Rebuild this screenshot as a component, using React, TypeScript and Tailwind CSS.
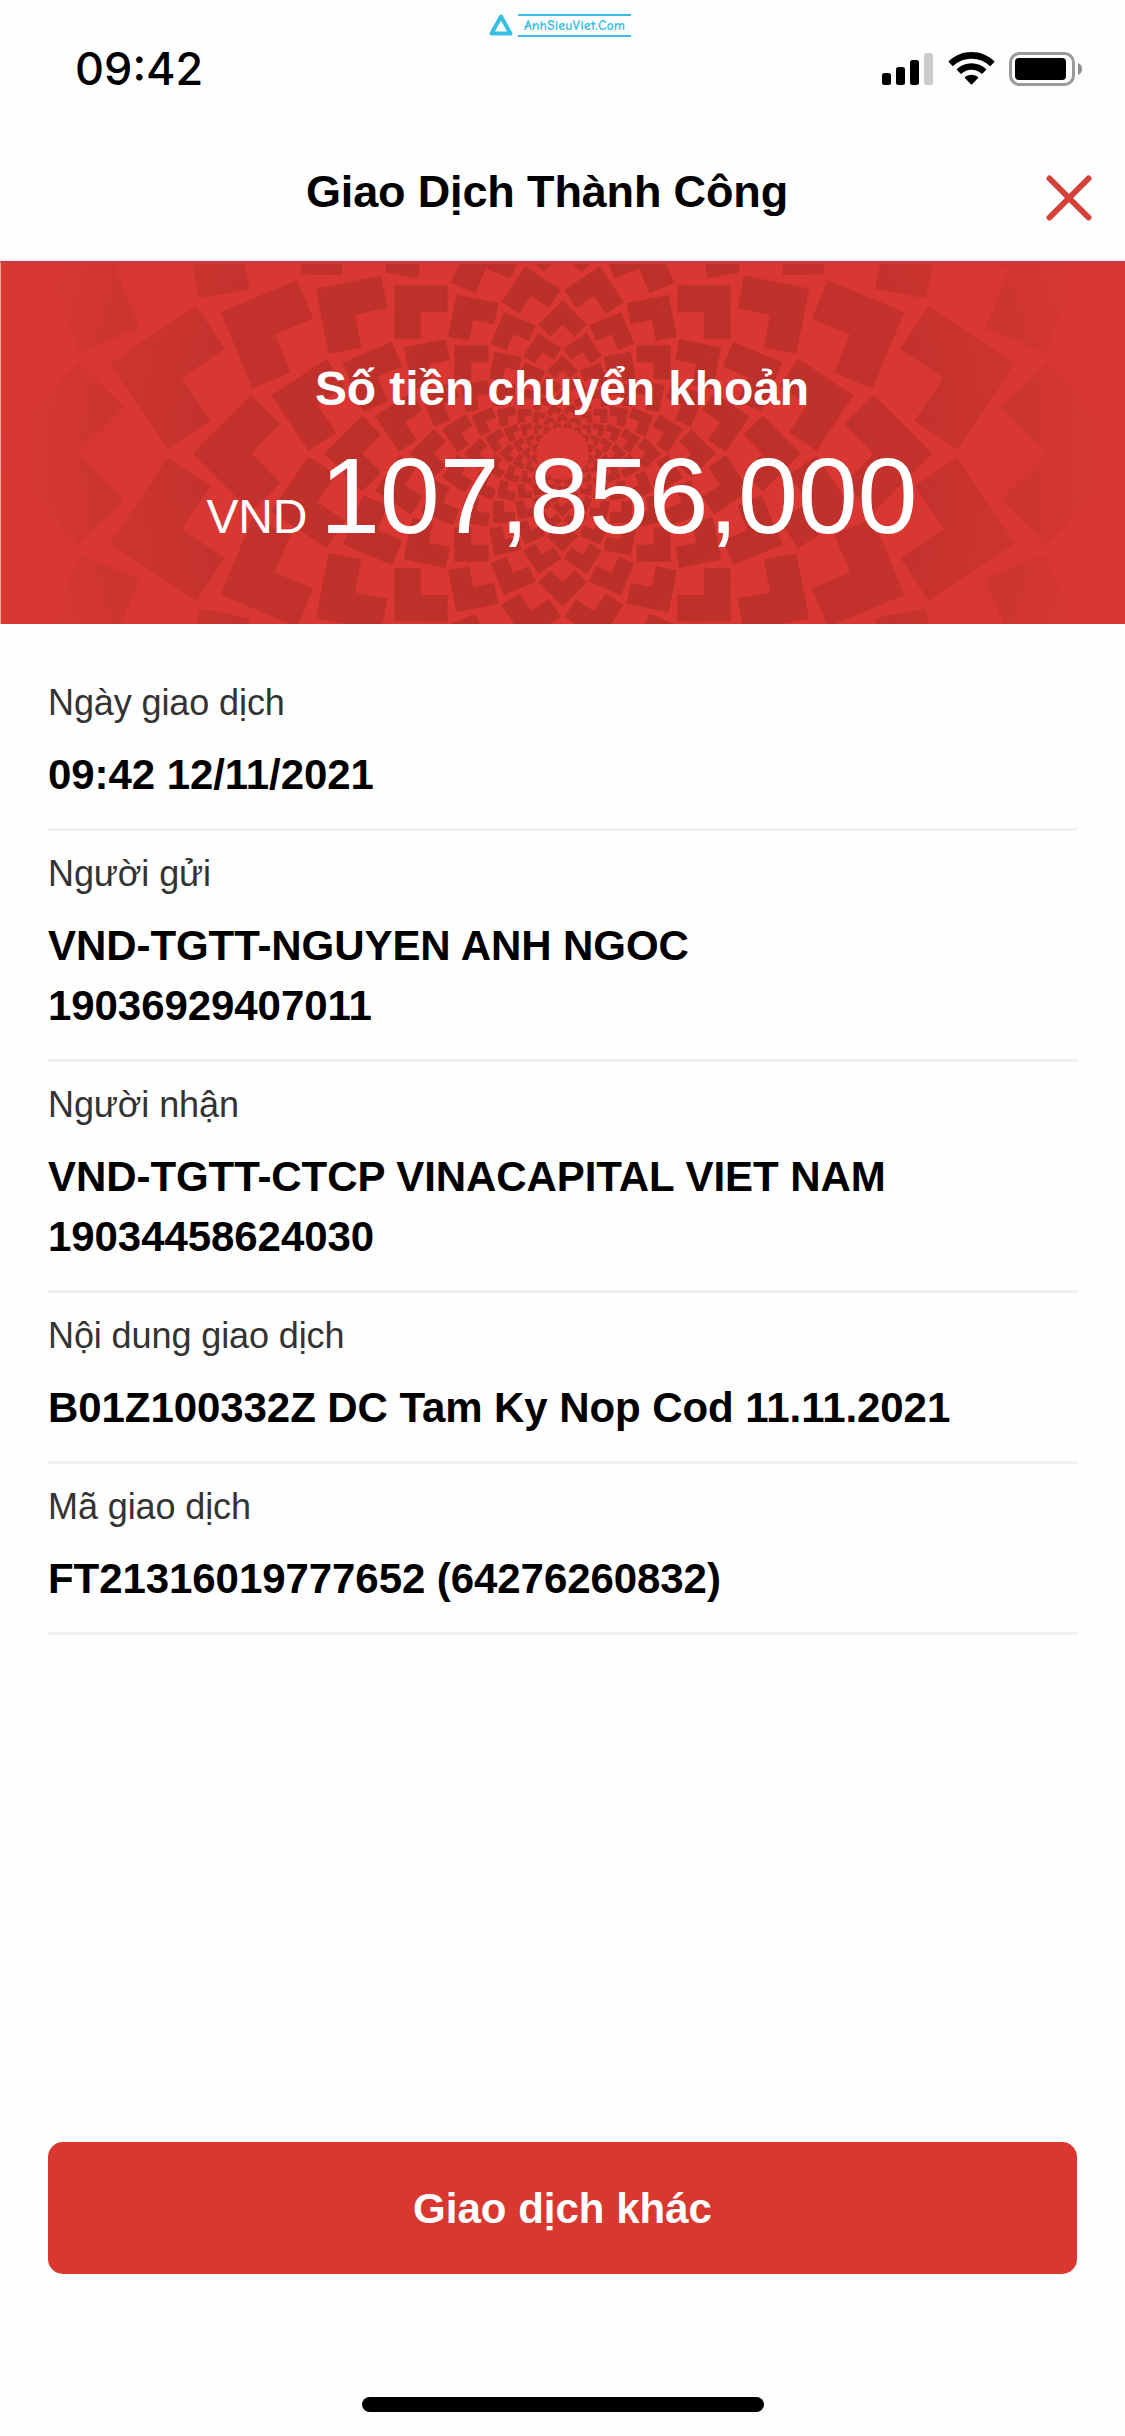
const CENTER_X = 562.5;
const CENTER_Y = 192.5;
const RINGS = 14;
const PER_RING = 16;

interface Detail {
  label: string;
  lines: string[];
}

const details: Detail[] = [
  { label: "Ngày giao dịch", lines: ["09:42 12/11/2021"] },
  {
    label: "Người gửi",
    lines: ["VND-TGTT-NGUYEN ANH NGOC", "19036929407011"],
  },
  {
    label: "Người nhận",
    lines: ["VND-TGTT-CTCP VINACAPITAL VIET NAM", "19034458624030"],
  },
  {
    label: "Nội dung giao dịch",
    lines: ["B01Z100332Z DC Tam Ky Nop Cod 11.11.2021"],
  },
  { label: "Mã giao dịch", lines: ["FT21316019777652 (64276260832)"] },
];

// Each tile is a square standing on its corner with the inner quarter cut out
function buildTiles() {
  const tiles: string[] = [];

  for (let ring = 0; ring < RINGS; ring++) {
    const r = 484 * Math.pow(0.802, ring);
    const h = r * 0.189;
    const shift = ring % 2 === 0 ? 0 : 0.5;

    for (let i = 0; i < PER_RING; i++) {
      const a = ((i + shift) * 2 * Math.PI) / PER_RING;
      const cos = Math.cos(a);
      const sin = Math.sin(a);
      const points = [
        [r + h, 0],
        [r, h],
        [r - h / 2, h / 2],
        [r, 0],
        [r - h / 2, -h / 2],
        [r, -h],
      ].map(([x = 0, y = 0]) => {
        const px = CENTER_X + x * cos - y * sin;
        const py = CENTER_Y + x * sin + y * cos;
        return `${px.toFixed(1)} ${py.toFixed(1)}`;
      });
      tiles.push(`M${points.join("L")}Z`);
    }
  }

  return tiles.join("");
}

const tilePath = buildTiles();

function Watermark() {
  return (
    <div className="absolute top-[14px] left-[489px] flex items-start gap-[5px] text-[#36bfe6]">
      <svg width="24" height="22" viewBox="0 0 24 22" fill="none">
        <path
          d="M12 2.5 21.5 19.5H2.5Z"
          stroke="currentColor"
          strokeWidth="4"
          strokeLinejoin="round"
        />
      </svg>
      <div className="flex h-[23px] w-[113px] items-center justify-center border-y-2 border-[#36bfe6] font-['Comic_Sans_MS','Comic_Neue','Lato'] text-[14px] font-bold tracking-[0.1px]">
        AnhSieuViet.Com
      </div>
    </div>
  );
}

function StatusBar() {
  return (
    <div className="flex h-[132px] items-start justify-between pr-[42px] pl-[75px]">
      <span className="mt-[41px] font-['Inter'] text-[45px] leading-[56px] font-medium">
        09:42
      </span>
      <div className="mt-[51px] flex items-start">
        <svg width="52" height="36" viewBox="0 0 52 36">
          <rect x="0" y="22" width="9" height="12" rx="2.5" />
          <rect x="14" y="16" width="9" height="18" rx="2.5" />
          <rect x="28" y="9" width="9" height="25" rx="2.5" />
          <rect x="42" y="2" width="9" height="32" rx="2.5" fill="#cbcbcb" />
        </svg>
        <svg
          className="ml-[14px]"
          width="48"
          height="36"
          viewBox="0 0 48 36"
        >
          <path d="M23.5 1C32.3 1 40.2 4.4 46.1 10a.8.8 0 0 1 0 1.2l-3.4 3.5a.8.8 0 0 1-1.2 0A26 26 0 0 0 23.5 7.700 26 26 0 0 0 5.500 14.700a.8.8 0 0 1-1.200 0L.9 11.200a.8.8 0 0 1 0-1.200C6.800 4.400 14.700 1 23.500 1Z" />
          <path d="M23.500 12.300c5.600 0 10.600 2.100 14.500 5.600a.8.8 0 0 1 0 1.200l-3.500 3.500a.8.8 0 0 1-1.100 0 14.700 14.700 0 0 0-19.800 0 .8.8 0 0 1-1.100 0L9 19.100a.8.8 0 0 1 0-1.200c3.900-3.500 8.900-5.600 14.500-5.600Z" />
          <path d="M23.500 23.800c2.500 0 4.700.9 6.400 2.300a.8.8 0 0 1 0 1.200l-5.800 5.900a.8.8 0 0 1-1.200 0l-5.800-5.900a.8.8 0 0 1 0-1.200c1.700-1.400 3.900-2.300 6.400-2.300Z" />
        </svg>
        <svg
          className="ml-[12px]"
          width="75"
          height="36"
          viewBox="0 0 75 36"
        >
          <rect
            x="2.5"
            y="2.5"
            width="63"
            height="31"
            rx="9"
            fill="none"
            stroke="#9b9b9b"
            strokeWidth="3"
          />
          <rect x="7" y="7" width="51" height="22" rx="4" />
          <path d="M70 12c2.600 1 4 3.200 4 6s-1.400 5-4 6Z" fill="#8f8f8f" />
        </svg>
      </div>
    </div>
  );
}

function Header() {
  return (
    <div className="relative flex h-[129px] justify-center border-b-2 border-[#fbeeee] pr-[31px]">
      <h1 className="mt-[30px] text-[45px] leading-[60px] font-bold tracking-[-0.15px]">
        Giao Dịch Thành Công
      </h1>
      <button
        type="button"
        aria-label="Đóng"
        className="absolute top-[43px] right-[33px]"
      >
        <svg width="46" height="46" viewBox="0 0 46 46">
          <path
            d="M3.500 3.500 42.500 42.500M42.500 3.500 3.500 42.500"
            stroke="#d6403b"
            strokeWidth="6"
            strokeLinecap="round"
          />
        </svg>
      </button>
    </div>
  );
}

function AmountBanner() {
  return (
    <div className="relative h-[363px] overflow-hidden border-t-3 border-l border-t-[#cb3b43] border-l-[#e8a3a5] bg-[#da3733] text-white">
      <svg
        className="absolute -top-[3px] left-0"
        width="1124"
        height="363"
        viewBox="1 0 1124 363"
      >
        <defs>
          <radialGradient
            id="fade"
            gradientUnits="userSpaceOnUse"
            cx={CENTER_X}
            cy={CENTER_Y}
            r="560"
          >
            <stop offset="0" stopColor="#ba2f29" />
            <stop offset="0.35" stopColor="#bd302a" />
            <stop offset="0.65" stopColor="#c5322d" />
            <stop offset="0.85" stopColor="#cf352f" />
            <stop offset="1" stopColor="#da3733" />
          </radialGradient>
        </defs>
        <path d={tilePath} fill="url(#fade)" />
      </svg>
      <div className="relative flex flex-col items-center pt-[95px] pr-[2px]">
        <p className="text-[48px] leading-[60px] font-bold tracking-[-0.1px]">
          Số tiền chuyển khoản
        </p>
        <p className="mt-[17px] text-[108px] leading-[120px] tracking-[-0.3px] whitespace-nowrap">
          <span className="text-[48px]">VND </span>
          107,856,000
        </p>
      </div>
    </div>
  );
}

function DetailRow({ label, lines }: Detail) {
  return (
    <div className="border-b-3 border-[#f0f0f0] pt-[19px] pb-[23px]">
      <p className="text-[36px] leading-[48px] tracking-[-0.1px] text-[#333333]">
        {label}
      </p>
      <div className="mt-[18px] text-[42px] leading-[60px] font-bold tracking-[-0.07px]">
        {lines.map((line) => (
          <p key={line} className="whitespace-nowrap">
            {line}
          </p>
        ))}
      </div>
    </div>
  );
}

export default function App() {
  return (
    <div className="relative flex h-[2436px] w-[1125px] flex-col overflow-hidden bg-[#fefefe] font-['Liberation_Sans',Arial,sans-serif] text-black">
      <Watermark />
      <StatusBar />
      <Header />
      <AmountBanner />

      <div className="mt-[36px] px-12">
        {details.map((detail) => (
          <DetailRow key={detail.label} {...detail} />
        ))}
      </div>

      <div className="mt-auto px-12">
        <button
          type="button"
          className="h-[132px] w-full rounded-[15px] bg-[#d93730] text-[42px] font-bold text-white"
        >
          Giao dịch khác
        </button>
      </div>
      <div className="mx-auto mt-[123px] mb-6 h-[15px] w-[402px] shrink-0 rounded-full bg-black" />
    </div>
  );
}
